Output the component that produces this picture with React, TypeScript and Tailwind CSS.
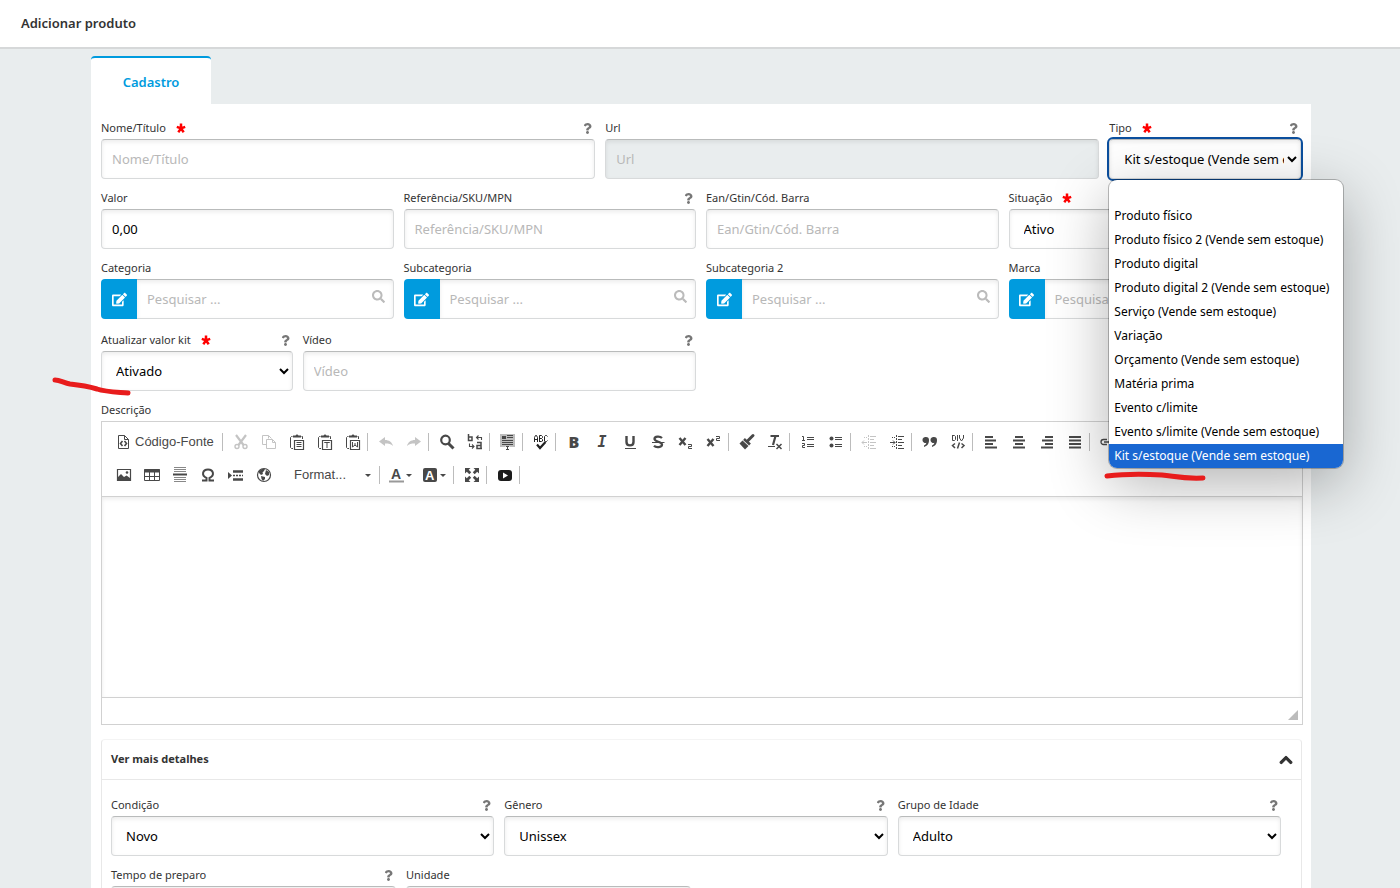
import type { ReactNode } from "react";
import { FaChevronUp, FaEdit, FaQuestion, FaSearch } from "react-icons/fa";

const CONTROL =
  "h-10 w-full rounded border border-[#d8dadb] border-t-[#b9bbbb] text-[13px] text-black placeholder:text-[#b8b8b8] shadow-[inset_0_2px_4px_rgba(0,0,0,0.08)]";

const tipos = [
  "",
  "Produto físico",
  "Produto físico 2 (Vende sem estoque)",
  "Produto digital",
  "Produto digital 2 (Vende sem estoque)",
  "Serviço (Vende sem estoque)",
  "Variação",
  "Orçamento (Vende sem estoque)",
  "Matéria prima",
  "Evento c/limite",
  "Evento s/limite (Vende sem estoque)",
  "Kit s/estoque (Vende sem estoque)",
];

const Required = () => (
  <svg viewBox="0 0 10 10" className="size-2.5 text-[#ff0000]" aria-hidden="true">
    <path
      d="M5 5.4V.6M5 5.4L.8 3.9M5 5.4L9.2 3.9M5 5.4L2.3 9.2M5 5.4L7.7 9.2"
      stroke="currentColor"
      strokeWidth="2.5"
    />
  </svg>
);

type FieldProps = {
  id: string;
  label: string;
  className: string;
  required?: boolean;
  help?: boolean;
  children: ReactNode;
};

const Field = ({ id, label, className, required, help, children }: FieldProps) => (
  <div className={className}>
    <div className="flex h-5 items-center gap-2.5 pb-0.5 text-[11px] leading-4 text-[#333]">
      <label htmlFor={id}>{label}</label>
      {required && <Required />}
      {help && (
        <button type="button" aria-label="Ajuda" className="mr-0.5 ml-auto text-[#777]">
          <FaQuestion size={11} />
        </button>
      )}
    </div>
    {children}
  </div>
);

const TextInput = ({ id, label, value }: { id: string; label: string; value?: string }) => (
  <input id={id} type="text" placeholder={label} defaultValue={value} className={`${CONTROL} bg-white px-2.5`} />
);

const Select = ({ id, value }: { id: string; value: string }) => (
  <select id={id} className={`${CONTROL} bg-white pl-2.5`}>
    <option>{value}</option>
  </select>
);

const SearchField = ({ id, label }: { id: string; label: string }) => (
  <Field id={id} label={label} className="col-span-3">
    <div className="flex h-10">
      <button
        type="button"
        aria-label={`Editar ${label}`}
        className="flex w-9 shrink-0 items-center justify-center rounded-l bg-[#009bde] text-white"
      >
        <FaEdit size={15} />
      </button>
      <div className="flex min-w-0 flex-1 items-center rounded-r border border-l-0 border-[#d8dadb] border-t-[#b9bbbb] pr-2 shadow-[inset_0_2px_4px_rgba(0,0,0,0.08)]">
        <input
          id={id}
          type="text"
          placeholder="Pesquisar ..."
          className="h-full min-w-0 flex-1 px-2.5 text-[13px] outline-none placeholder:text-[#b8b8b8]"
        />
        <FaSearch size={13} className="mb-1.5 text-[#bbb]" />
      </div>
    </div>
  </Field>
);

/* ---- editor toolbar ---- */

const Icon = ({ children }: { children: ReactNode }) => (
  <svg viewBox="0 0 16 16" className="size-4 shrink-0 overflow-visible" fill="none" stroke="currentColor" aria-hidden="true">
    {children}
  </svg>
);

const Glyph = ({ x, y, size, children }: { x: number; y: number; size: number; children: string }) => (
  <text x={x} y={y} fontSize={size} fontWeight="bold" fontFamily="Liberation Sans, sans-serif" fill="currentColor" stroke="none">
    {children}
  </text>
);

const Tool = ({ name, disabled, children }: { name: string; disabled?: boolean; children: ReactNode }) => (
  <button
    type="button"
    title={name}
    disabled={disabled}
    className="flex h-7 w-7 shrink-0 items-center justify-center text-[#484848] disabled:text-[#c4c4c4]"
  >
    {children}
  </button>
);

const Sep = () => <span className="mr-1 h-[18px] w-px shrink-0 bg-[#bcbcbc]" />;

const Arrow = () => (
  <svg viewBox="0 0 6 3" className="h-[3px] w-1.5 shrink-0" aria-hidden="true">
    <path d="M0 0h6L3 3z" fill="#484848" />
  </svg>
);

const Clipboard = ({ children }: { children?: ReactNode }) => (
  <Icon>
    <path d="M3.5 2.5h-1l-1 1v10l1 1H4M12.5 2.5h1V5" />
    <path d="M4 1.5h2.5l1-1h1l1 1H12v2H4z" fill="currentColor" stroke="none" />
    <path d="M5.5 6.5h9v9h-9z" strokeWidth="1.2" />
    {children}
  </Icon>
);

const Lines = ({ d }: { d: string }) => (
  <Icon>
    <path d={d} strokeWidth="2" />
  </Icon>
);

const Indent = ({ arrow }: { arrow: string }) => (
  <Icon>
    <path d="M7.5 1v14" strokeDasharray="2 1" />
    <path d="M9 2.5h6M9 5.5h4M9 8.5h6M9 11.5h4M9 14.5h6M3 3.5h1M5 3.5h1M3 12.5h1M5 12.5h1" />
    <path d={arrow} />
  </Icon>
);

const ToolbarTop = () => (
  <div className="flex h-7 items-center">
    <button
      type="button"
      className="flex h-7 w-[112px] shrink-0 items-center gap-[3px] pl-1.5 font-['Liberation_Sans',sans-serif] text-[13px] text-[#484848]"
    >
      <Icon>
        <path d="M2.5 1.5h6l4 4v9h-10zM8.5 1.5v4h4" />
        <path d="M6.5 7L4.5 9.5l2 2.5M8.5 7l2 2.5-2 2.5" strokeWidth="1.6" />
      </Icon>
      <span className="whitespace-nowrap">Código-Fonte</span>
    </button>
    <Sep />
    <Tool name="Recortar" disabled>
      <Icon>
        <path d="M3 1l7.5 10M13 1L5.5 11" strokeWidth="2.2" />
        <circle cx="4" cy="12.5" r="2" strokeWidth="1.4" />
        <circle cx="12" cy="12.5" r="2" strokeWidth="1.4" />
      </Icon>
    </Tool>
    <Tool name="Copiar" disabled>
      <Icon>
        <path d="M5 10.5H1.5V1.5h6l3 3M7.5 1.5v3M5.5 5.5h6l3 3v6h-9zM11.5 5.5v3h3" />
      </Icon>
    </Tool>
    <Tool name="Colar">
      <Clipboard>
        <path d="M7.5 8.5h5M7.5 10.5h5M7.5 12.5h5" />
      </Clipboard>
    </Tool>
    <Tool name="Colar como texto sem formatação">
      <Clipboard>
        <path d="M7.5 9V8.5h5V9M10 8.5v5.5" />
      </Clipboard>
    </Tool>
    <Tool name="Colar do Word">
      <Clipboard>
        <path d="M7.5 8v5L10 11l2.5 2V8M10 9v3" />
      </Clipboard>
    </Tool>
    <Sep />
    <Tool name="Desfazer" disabled>
      <Icon>
        <path d="M1 7.5L7 3v3c4 0 7 2 8 6-2-2-4-2.5-8-2.5V12z" fill="currentColor" stroke="none" />
      </Icon>
    </Tool>
    <Tool name="Refazer" disabled>
      <Icon>
        <path d="M15 7.5L9 3v3c-4 0-7 2-8 6 2-2 4-2.5 8-2.5V12z" fill="currentColor" stroke="none" />
      </Icon>
    </Tool>
    <Sep />
    <Tool name="Localizar">
      <Icon>
        <circle cx="6.5" cy="6" r="4.3" strokeWidth="2.2" />
        <path d="M9.5 9.5l5 5" strokeWidth="3" />
      </Icon>
    </Tool>
    <Tool name="Substituir">
      <Icon>
        <path d="M1.5 0v6.5H5V3H1.5M10 8.5h4v6.5M14 11.5h-4v3h5" strokeWidth="1.5" />
        <path d="M14.5 6V3.5H9.5M11.5 1.5l-2 2 2 2M2.5 9.5v3H7M5 10.5l2 2-2 2" strokeWidth="1.1" />
      </Icon>
    </Tool>
    <Sep />
    <Tool name="Selecionar Tudo">
      <Icon>
        <path d="M0 0h15v13H0z" fill="#bdbdbd" stroke="none" />
        <path d="M2 2h4v3H2z" fill="currentColor" stroke="none" />
        <path d="M7 1.5h6M7 3.5h6M2 6.5h11M2 8.5h11M2 10.5h11" strokeWidth="1.2" />
        <path d="M5.500 12h4v4h-4z" fill="#fff" stroke="none" />
        <path d="M6 12.5h3M7.5 12.5v3M6 15.5h3" />
      </Icon>
    </Tool>
    <Sep />
    <Tool name="Verificar Ortografia">
      <Icon>
        <path
          d="M1.500 8V3.5l1-2h1l1 2V8M1.5 5.5h3M6.5 8V1.5h2l1 1v1l-1 1h-2M8.5 4.5l1 1V7l-1 .5h-2M14.5 2.5l-1-1h-1l-1 1V7l1 .5h1l1-1"
          stroke="#222"
        />
        <path d="M4 10.5l3 3.5 5.5-6" strokeWidth="2.200" stroke="#222" />
      </Icon>
    </Tool>
    <Sep />
    <Tool name="Negrito">
      <span className="font-['Open_Sans',sans-serif] text-base font-extrabold">B</span>
    </Tool>
    <Tool name="Itálico">
      <span className="font-['DejaVu_Sans_Mono',monospace] text-[15px] font-bold italic">I</span>
    </Tool>
    <Tool name="Sublinhado">
      <Icon>
        <path d="M4.5 2v6c0 4.500 7 4.500 7 0V2" strokeWidth="2.400" />
        <path d="M3 14.5h11" />
      </Icon>
    </Tool>
    <Tool name="Tachado">
      <Icon>
        <path d="M12 4C10 2 4.500 2 4.500 5S12 7.500 12 10.500 6 14 4 11.800" strokeWidth="2.300" />
        <path d="M2 8.500h12.500" />
      </Icon>
    </Tool>
    <Tool name="Subscrito">
      <Icon>
        <path d="M1.5 4l6 7M7.5 4l-6 7" strokeWidth="2.400" />
        <path d="M10 10.5h3.5v2h-3v2H14" />
      </Icon>
    </Tool>
    <Tool name="Sobrescrito">
      <Icon>
        <path d="M1.5 5l6 7M7.5 5l-6 7" strokeWidth="2.400" />
        <path d="M10 2.5h3.5v2h-3v2H14" />
      </Icon>
    </Tool>
    <Sep />
    <Tool name="Copiar Formatação">
      <Icon>
        <path d="M14 1.500L9 6.500" strokeWidth="3" strokeLinecap="round" />
        <path d="M5 5l6 5.500" strokeWidth="2.600" />
        <path d="M3.500 6.500l6 5.500L6 15.500.500 9.500z" fill="currentColor" stroke="none" />
      </Icon>
    </Tool>
    <Tool name="Remover Formatação">
      <Icon>
        <path d="M3.5 2h8.5M8.5 2L6 11" strokeWidth="2.200" />
        <path d="M1 12.5h7" />
        <path d="M9.5 10l5 5M14.5 10l-5 5" strokeWidth="1.500" />
      </Icon>
    </Tool>
    <Sep />
    <Tool name="Lista numerada">
      <Icon>
        <path d="M2 2.5h1.500V6M2 6.500h3M2 9.500h2.500v2h-2v2H5" />
        <path d="M7 3.5h7M7 5.5h7M7 10.5h7M7 12.5h7" />
      </Icon>
    </Tool>
    <Tool name="Lista sem números">
      <Icon>
        <circle cx="3.5" cy="4.5" r="2" fill="currentColor" stroke="none" />
        <circle cx="3.5" cy="11.5" r="2" fill="currentColor" stroke="none" />
        <path d="M7 3.5h7M7 5.5h7M7 10.5h7M7 12.5h7" />
      </Icon>
    </Tool>
    <Sep />
    <Tool name="Diminuir Recuo" disabled>
      <Indent arrow="M6 8.5H1M3 6.5l-2 2 2 2" />
    </Tool>
    <Tool name="Aumentar Recuo">
      <Indent arrow="M1 8.5h5M4 6.5l2 2-2 2" />
    </Tool>
    <Sep />
    <Tool name="Citação">
      <Icon>
        <g fill="currentColor" stroke="none">
          <path d="M4 3a3 3 0 0 1 3 3c0 4-2 6-5 7v-1.5c1.5-.7 2.2-1.6 2.400-2.700A3 3 0 1 1 4 3z" />
          <path d="M12 3a3 3 0 0 1 3 3c0 4-2 6-5 7v-1.5c1.500-.7 2.200-1.600 2.400-2.700A3 3 0 1 1 12 3z" />
        </g>
      </Icon>
    </Tool>
    <Tool name="Criar Container de DIV">
      <Icon>
        <path d="M2.5 1v5.5h2l1-1V2.500l-1-1h-2M7.500 1v6M9.500 1v3l2 3 2-3V1" />
        <path d="M5 9.500l-2.500 2L5 14M9.500 8.500l-2 6M11.500 9.500l2.500 2-2.500 2.500" strokeWidth="1.500" />
      </Icon>
    </Tool>
    <Sep />
    <Tool name="Alinhar Esquerda">
      <Lines d="M2 3h8M2 6.500h11M2 10h8M2 13.500h12" />
    </Tool>
    <Tool name="Centralizar">
      <Lines d="M4 3h8M2 6.500h12M4 10h8M2 13.500h12" />
    </Tool>
    <Tool name="Alinhar Direita">
      <Lines d="M6 3h8M3 6.500h11M6 10h8M2 13.500h12" />
    </Tool>
    <Tool name="Justificado">
      <Lines d="M2 3h12M2 6.500h12M2 10h12M2 13.500h12" />
    </Tool>
    <Sep />
    <Tool name="Inserir/Editar Link">
      <Icon>
        <path d="M7 5.500H3.500a2.500 2.500 0 0 0 0 5H7M9 5.500h3.500a2.500 2.500 0 0 1 0 5H9M4 8h8" strokeWidth="1.300" />
      </Icon>
    </Tool>
  </div>
);

const ToolbarBottom = () => (
  <div className="flex h-7 items-center">
    <Tool name="Imagem">
      <Icon>
        <path d="M1.5 2.5h13v11h-13z" strokeWidth="1.200" />
        <path d="M2 13V10l3-3 3 3 2.500-1.500L14 11v2z" fill="currentColor" stroke="none" />
        <circle cx="11" cy="5.500" r="1.300" fill="currentColor" stroke="none" />
      </Icon>
    </Tool>
    <Tool name="Tabela">
      <Icon>
        <path d="M.5 2.5h15v11H.5zM.5 9.500h15M5.500 5v9M10.500 5v9" />
        <path d="M0 4h16" strokeWidth="3" />
      </Icon>
    </Tool>
    <Tool name="Inserir Linha Horizontal">
      <Icon>
        <path d="M2 .5h12M2 2.5h12M2 4.5h12M2 10.5h12M2 12.5h12M2 14.5h12" stroke="#888" />
        <path d="M1 7.500h14" strokeWidth="2" />
      </Icon>
    </Tool>
    <Tool name="Inserir Caractere Especial">
      <Icon>
        <path d="M2 13.500h4.500V11C1 8.500 2.500 2.500 8 2.500s7 6 1.500 8.500v2.500H14" strokeWidth="2" />
      </Icon>
    </Tool>
    <Tool name="Inserir Quebra de Página">
      <Icon>
        <path d="M0 5l4 3.500L0 12z" fill="currentColor" stroke="none" />
        <path d="M5 4.500h10M5 12.500h10" strokeWidth="2.500" />
        <path d="M5 8.500h10" strokeDasharray="2 1" strokeWidth="1.300" />
      </Icon>
    </Tool>
    <Tool name="IFrame">
      <Icon>
        <circle cx="8" cy="8" r="6.500" strokeWidth="1.200" />
        <path d="M3 4l3-2h3L8 4 6.500 5.500 7 7 5 8 3 6zM10 3l3 2v3l-2 1-2-2 .5-2zM5 9l4 1v2l-2 2-1.500-2z" fill="currentColor" stroke="none" />
      </Icon>
    </Tool>
    <button
      type="button"
      className="flex h-7 w-[101px] items-center justify-between pr-2 pl-4 font-['Liberation_Sans',sans-serif] text-[13px] text-[#484848]"
    >
      Format...
      <Arrow />
    </button>
    <Sep />
    <button type="button" title="Cor do Texto" className="flex h-7 w-[34px] items-center gap-0.5 pl-1 text-[#484848]">
      <Icon>
        <Glyph x={3} y={12} size={14}>A</Glyph>
        <path d="M1 14.5h15" stroke="#999" strokeWidth="2" />
      </Icon>
      <Arrow />
    </button>
    <button type="button" title="Cor do Plano de Fundo" className="flex h-7 w-[35px] items-center gap-0.5 pl-1 text-[#484848]">
      <Icon>
        <rect x="1" y="1" width="14" height="14" rx="2" fill="currentColor" stroke="none" />
        <g className="text-white">
          <Glyph x={3} y={13} size={13}>A</Glyph>
        </g>
      </Icon>
      <Arrow />
    </button>
    <Sep />
    <Tool name="Maximizar">
      <Icon>
        <path d="M1 1h5.500L4.700 2.800l2.500 2.500-1.900 1.900-2.500-2.500L1 6.500zM15 1v5.500l-1.800-1.800-2.500 2.500-1.900-1.900 2.500-2.500L9.500 1zM1 15V9.500l1.800 1.800 2.500-2.500 1.900 1.900-2.500 2.500L6.500 15zM15 15H9.500l1.800-1.800-2.500-2.500 1.900-1.900 2.500 2.500L15 9.500z" fill="currentColor" stroke="none" />
      </Icon>
    </Tool>
    <Sep />
    <Tool name="Vídeo do YouTube">
      <Icon>
        <rect x="1" y="3" width="14" height="11" rx="3" fill="#1c1c1c" stroke="none" />
        <path d="M6 5.500l5 3-5 3z" fill="#fff" stroke="none" />
      </Icon>
    </Tool>
    <Sep />
  </div>
);

const Editor = () => (
  <div className="border border-[#d1d1d1]">
    <div className="flex flex-col gap-[5px] overflow-hidden border-b border-[#d1d1d1] px-2 pt-1.5 pb-[7px]">
      <ToolbarTop />
      <ToolbarBottom />
    </div>
    <textarea id="descricao" className="block h-[200px] w-full resize-none p-5 text-[13px] shadow-[inset_0_2px_4px_rgba(0,0,0,0.08)] outline-none" />
    <div className="flex h-[27px] items-end justify-end border-t border-[#d1d1d1] p-1">
      <svg viewBox="0 0 10 10" className="size-2.5" aria-hidden="true">
        <path d="M10 0v10H0z" fill="#bcbcbc" />
      </svg>
    </div>
  </div>
);

const TipoField = () => (
  <Field id="tipo" label="Tipo" className="relative col-span-2" required help>
    <select
      id="tipo"
      defaultValue={tipos[11]}
      className={`${CONTROL} bg-white pl-2.5 outline-2 outline-[#0b4f9e]`}
    >
      {tipos.map((tipo) => (
        <option key={tipo}>{tipo}</option>
      ))}
    </select>
    <ul
      role="listbox"
      aria-label="Tipo"
      className="absolute top-[61px] left-0 z-10 w-[234px] overflow-hidden rounded-lg bg-white whitespace-nowrap text-black shadow-[0_0_0_1px_rgba(0,0,0,0.25),0_16px_60px_rgba(0,0,0,0.3)]"
    >
      {tipos.map((tipo, i) => (
        <li
          key={tipo}
          role="option"
          aria-selected={i === 11}
          className="h-6 px-[5px] text-xs leading-6 aria-selected:bg-[#1967d2] aria-selected:text-white"
        >
          {tipo}
        </li>
      ))}
    </ul>
  </Field>
);

const Details = () => (
  <section className="mt-3.5 mr-px rounded border border-[#e8e8e8] border-t-[#f4f4f4]">
    <button type="button" className="flex h-10 w-full items-center justify-between border-b border-[#e8e8e8] pr-2 pl-[9px] text-[11px] font-bold text-[#333]">
      Ver mais detalhes
      <FaChevronUp size={14} stroke="currentColor" strokeWidth={40} />
    </button>
    <div className="flex flex-col gap-2.5 pt-4 pr-5 pb-5 pl-[9px]">
      <div className="grid grid-cols-3 gap-x-2.5">
        <Field id="condicao" label="Condição" className="" help>
          <Select id="condicao" value="Novo" />
        </Field>
        <Field id="genero" label="Gênero" className="" help>
          <Select id="genero" value="Unissex" />
        </Field>
        <Field id="idade" label="Grupo de Idade" className="" help>
          <Select id="idade" value="Adulto" />
        </Field>
      </div>
      <div className="grid grid-cols-4 gap-x-2.5">
        <Field id="preparo" label="Tempo de preparo" className="" help>
          <TextInput id="preparo" label="Tempo de preparo" />
        </Field>
        <Field id="unidade" label="Unidade" className="">
          <TextInput id="unidade" label="Unidade" />
        </Field>
      </div>
    </div>
  </section>
);

export default function App() {
  return (
    <div className="relative flex h-screen flex-col overflow-hidden bg-[#e9edee] font-['Noto_Sans',sans-serif]">
      <header className="flex h-[49px] shrink-0 items-center border-b-2 border-[#d6d8d9] bg-white px-[21px]">
        <h1 className="text-[13px] font-semibold text-[#333]">Adicionar produto</h1>
      </header>
      <main className="pt-[7px] pr-[89px] pl-[91px]">
        <nav className="flex">
          <a
            href="#cadastro"
            className="flex h-12 w-[120px] items-center justify-center rounded-t border-t-2 border-[#009bde] bg-white pt-1 text-[13px] font-semibold text-[#009bde]"
          >
            Cadastro
          </a>
        </nav>
        <form id="cadastro" className="bg-white pt-[15px] pr-2 pb-10 pl-2.5">
          <div className="grid grid-cols-12 gap-2.5 pr-0.5">
            <Field id="nome" label="Nome/Título" className="col-span-5" required help>
              <TextInput id="nome" label="Nome/Título" />
            </Field>
            <Field id="url" label="Url" className="col-span-5">
              <input id="url" type="text" placeholder="Url" disabled className={`${CONTROL} bg-[#e9edee] px-2.5`} />
            </Field>
            <TipoField />
            <Field id="valor" label="Valor" className="col-span-3">
              <TextInput id="valor" label="Valor" value="0,00" />
            </Field>
            <Field id="sku" label="Referência/SKU/MPN" className="col-span-3" help>
              <TextInput id="sku" label="Referência/SKU/MPN" />
            </Field>
            <Field id="ean" label="Ean/Gtin/Cód. Barra" className="col-span-3">
              <TextInput id="ean" label="Ean/Gtin/Cód. Barra" />
            </Field>
            <Field id="situacao" label="Situação" className="col-span-3" required>
              <Select id="situacao" value="Ativo" />
            </Field>
            <SearchField id="categoria" label="Categoria" />
            <SearchField id="subcategoria" label="Subcategoria" />
            <SearchField id="subcategoria2" label="Subcategoria 2" />
            <SearchField id="marca" label="Marca" />
          </div>
          <div className="mt-3 mb-2.5 grid grid-cols-12 gap-2.5 pr-0.5">
            <Field id="atualizar" label="Atualizar valor kit" className="col-span-2" required help>
              <Select id="atualizar" value="Ativado" />
            </Field>
            <Field id="video" label="Vídeo" className="col-span-4" help>
              <TextInput id="video" label="Vídeo" />
            </Field>
          </div>
          <Field id="descricao" label="Descrição" className="">
            <Editor />
          </Field>
          <Details />
        </form>
      </main>

      {/* hand-drawn marks */}
      <svg viewBox="0 0 80 20" className="pointer-events-none absolute top-[376px] left-[52px] z-20 h-5 w-20" aria-hidden="true">
        <path d="M3 4C8 4 12 7 18 8C28 9 35 10 45 13C54 16 64 16 76 17" fill="none" stroke="#e81c1c" strokeWidth="5" strokeLinecap="round" />
      </svg>
      <svg viewBox="0 0 104 12" className="pointer-events-none absolute top-[471px] left-[1104px] z-20 h-3 w-[104px]" aria-hidden="true">
        <path d="M3 5C20 3 40 3 58 4C70 5 78 8 99 7" fill="none" stroke="#e81c1c" strokeWidth="5" strokeLinecap="round" />
      </svg>
    </div>
  );
}
